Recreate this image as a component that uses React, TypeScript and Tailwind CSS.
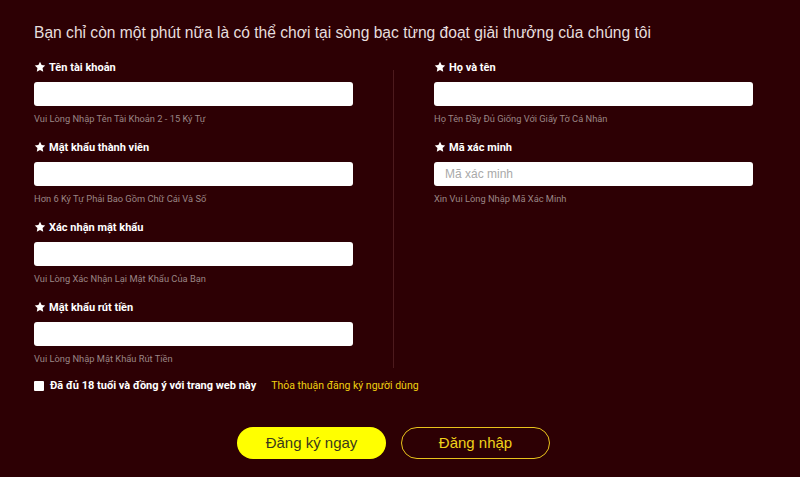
import type { ReactNode } from 'react';

const font = { fontFamily: '"Liberation Sans", Arial, sans-serif' };
const roboto = { fontFamily: 'Roboto, "Liberation Sans", Arial, sans-serif' };

function Star() {
  return (
    <svg viewBox="0 0 24 24" className="w-[12px] h-[12px] mr-[3px] fill-white shrink-0">
      <path d="M12 1.5l3.2 6.7 7.3.9-5.4 5 1.4 7.3L12 17.8l-6.5 3.6 1.4-7.3-5.4-5 7.3-.9z" />
    </svg>
  );
}

interface FieldProps {
  label: string;
  hint: string;
  placeholder?: string;
}

function Field({ label, hint, placeholder }: FieldProps) {
  return (
    <div className="flex flex-col">
      <div className="flex items-center h-[14px] text-[11px] font-bold text-white leading-none" style={roboto}>
        <Star />
        {label}
      </div>
      <input
        placeholder={placeholder}
        className="mt-[8px] h-[24px] w-full bg-white rounded-[3px] px-[11px] text-[12px] text-[#333] placeholder:text-[#a9a9a9] outline-none"
        style={font}
      />
      <div className="mt-[7px] h-[12px] text-[9.3px] leading-[12px] text-[#9a8585]" style={roboto}>
        {hint}
      </div>
      <div className="h-[15px]" />
    </div>
  );
}

function Column({ children }: { children: ReactNode }) {
  return <div className="w-[319px] flex flex-col">{children}</div>;
}

export default function App() {
  return (
    <div className="w-[800px] h-[477px] bg-[#2d0004] overflow-hidden" style={font}>
      <div className="w-[719px] ml-[34px] pt-[23px]">
        <h1 className="text-[15.6px] leading-[20px] text-[#e6dede] font-normal">
          Bạn chỉ còn một phút nữa là có thể chơi tại sòng bạc từng đoạt giải thưởng của chúng tôi
        </h1>

        <div className="flex mt-[17px]">
          <Column>
            <Field label="Tên tài khoản" hint="Vui Lòng Nhập Tên Tài Khoản 2 - 15 Ký Tự" />
            <Field label="Mật khẩu thành viên" hint="Hơn 6 Ký Tự Phải Bao Gồm Chữ Cái Và Số" />
            <Field label="Xác nhận mật khẩu" hint="Vui Lòng Xác Nhận Lại Mật Khẩu Của Bạn" />
            <Field label="Mật khẩu rút tiền" hint="Vui Lòng Nhập Mật Khẩu Rút Tiền" />
          </Column>
          <div className="mx-[40px] mt-[10px] mb-[12px] w-px bg-[#4c1a1d]" />
          <Column>
            <Field label="Họ và tên" hint="Họ Tên Đầy Đủ Giống Với Giấy Tờ Cá Nhân" />
            <Field label="Mã xác minh" hint="Xin Vui Lòng Nhập Mã Xác Minh" placeholder="Mã xác minh" />
          </Column>
        </div>

        <div className="flex items-center h-[14px] -mt-[1px]" style={roboto}>
          <span className="w-[10px] h-[10px] bg-white rounded-[1px] shrink-0" />
          <span className="ml-[6px] text-[11px] font-bold text-white">
            Đã đủ 18 tuổi và đồng ý với trang web này
          </span>
          <span className="ml-[15px] text-[10.5px] text-[#f0d010]">Thỏa thuận đăng ký người dùng</span>
        </div>

        <div className="flex justify-center gap-[15px] mt-[34px]">
          <button className="w-[149px] h-[32px] rounded-full bg-[#ffff00] text-[#3a3a1a] text-[15px]">
            Đăng ký ngay
          </button>
          <button className="w-[149px] h-[32px] rounded-full border-[1.5px] border-[#e9c31c] text-[#f0d21a] text-[15px]">
            Đăng nhập
          </button>
        </div>
      </div>
    </div>
  );
}
